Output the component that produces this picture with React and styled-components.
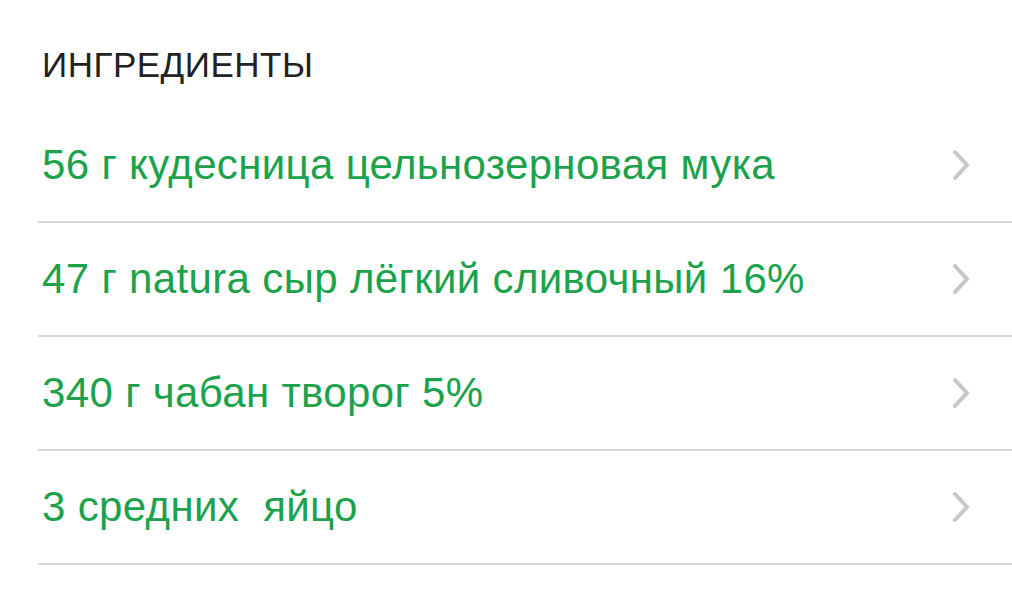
import React from "react";
import styled, { createGlobalStyle } from "styled-components";

const Global = createGlobalStyle`
  html, body { margin: 0; padding: 0; background: #ffffff; }
  body { font-family: "Liberation Sans", Arial, sans-serif; }
`;

const Page = styled.div`
  width: 1012px;
  height: 600px;
  overflow: hidden;
  background: #ffffff;
  padding-top: 45px;
  box-sizing: border-box;
`;

const SectionTitle = styled.h2`
  margin: 0 0 24px 0;
  padding-left: 42px;
  font-size: 35px;
  line-height: 40px;
  font-weight: 400;
  color: #222222;
  letter-spacing: 0.5px;
`;

const List = styled.ul`
  list-style: none;
  margin: 0 0 0 38px;
  padding: 0;
`;

const Row = styled.li`
  display: flex;
  align-items: center;
  justify-content: space-between;
  height: 112px;
  padding: 0 42px 0 4px;
  border-bottom: 2px solid #d9d9dc;
`;

const Label = styled.span`
  font-size: 42px;
  line-height: 48px;
  letter-spacing: 0.35px;
  color: #1ba24b;
  white-space: pre;
`;

const Chevron = styled.svg`
  width: 18px;
  height: 32px;
  flex: none;
`;

const items = [
  "56 г кудесница цельнозерновая мука",
  "47 г natura сыр лёгкий сливочный 16%",
  "340 г чабан творог 5%",
  "3 средних  яйцо",
];

export default function App() {
  return (
    <Page>
      <Global />
      <SectionTitle>ИНГРЕДИЕНТЫ</SectionTitle>
      <List>
        {items.map((t) => (
          <Row key={t}>
            <Label>{t}</Label>
            <Chevron viewBox="0 0 18 32">
              <path d="M3 3 L15 16 L3 29" fill="none" stroke="#c6c6cb" strokeWidth="4" strokeLinecap="round" strokeLinejoin="round" />
            </Chevron>
          </Row>
        ))}
      </List>
    </Page>
  );
}
